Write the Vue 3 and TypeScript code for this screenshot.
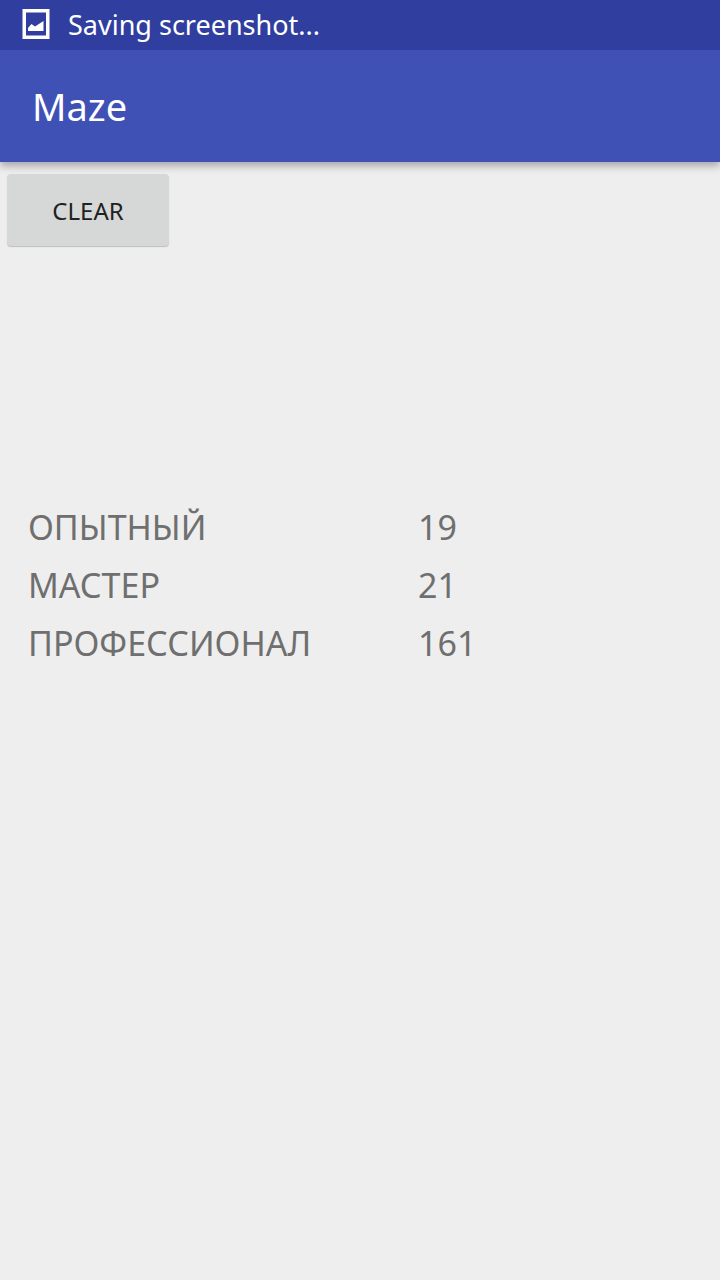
<script setup lang="ts">
interface Score {
  level: string
  value: number
}

const scores: Score[] = [
  { level: 'ОПЫТНЫЙ', value: 19 },
  { level: 'МАСТЕР', value: 21 },
  { level: 'ПРОФЕССИОНАЛ', value: 161 },
]
</script>

<template>
  <div class="screen">
    <div class="status-bar">
      <svg class="status-icon" viewBox="0 0 28 30" aria-hidden="true">
        <path fill="#fff" fill-rule="evenodd" d="M0.5 0H27.5V30H0.5ZM4 3.5V26.5H24V3.5Z" />
        <path fill="#fff" d="M6 22V19L9.5 15L13 17.5L21.5 12V22Z" />
      </svg>
      <span>Saving screenshot...</span>
    </div>
    <header class="app-bar">
      <h1>Maze</h1>
    </header>
    <main>
      <button type="button" class="clear">CLEAR</button>
      <table class="scores">
        <tbody>
          <tr v-for="score in scores" :key="score.level">
            <th scope="row">{{ score.level }}</th>
            <td>{{ score.value }}</td>
          </tr>
        </tbody>
      </table>
    </main>
  </div>
</template>

<style>
body {
  margin: 0;
  background: #eeeeee;
}
</style>

<style scoped>
.screen {
  min-height: 100vh;
  background: #eeeeee;
  font-family: "Noto Sans", sans-serif;
}
.status-bar {
  display: flex;
  align-items: center;
  gap: 18px;
  height: 50px;
  padding: 0 22px 2px;
  box-sizing: border-box;
  background: #303f9f;
  color: #fff;
  font-size: 27px;
}
.status-icon {
  width: 28px;
  height: 30px;
}
.app-bar {
  display: flex;
  align-items: center;
  height: 112px;
  padding: 0 32px;
  background: #3f51b5;
  color: #fff;
  box-shadow: 0 4px 8px rgba(0, 0, 0, 0.3);
  clip-path: inset(0 0 -16px 0);
}
h1 {
  margin: 0;
  font-size: 38px;
  font-weight: 400;
}
main {
  padding: 12px 7px;
}
.clear {
  display: block;
  width: 162px;
  height: 72px;
  border: 0;
  border-radius: 4px;
  background: #d6d8d7;
  box-shadow: 0 1px 1px rgba(0, 0, 0, 0.2);
  color: #212121;
  font-family: inherit;
  font-size: 24px;
  position: relative;
  z-index: 1;
}
.scores {
  width: 100%;
  margin-top: 252px;
  border-collapse: collapse;
  table-layout: fixed;
  color: #6f6f6f;
  font-size: 34px;
}
th,
td {
  height: 58px;
  padding: 0;
  font-weight: 400;
  text-align: left;
}
th {
  width: 411px;
  padding-left: 21px;
  box-sizing: border-box;
}
</style>
